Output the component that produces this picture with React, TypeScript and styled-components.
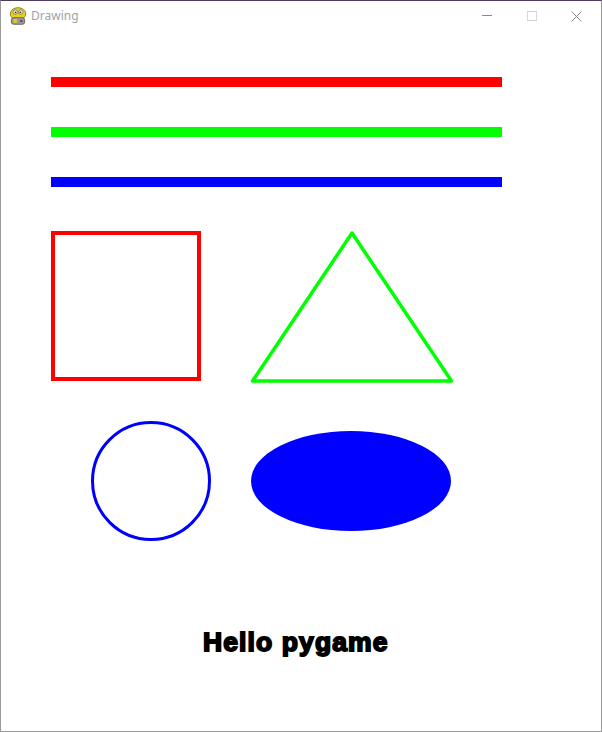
import React from "react";
import styled, { createGlobalStyle } from "styled-components";

const Global = createGlobalStyle`
  html, body { margin: 0; padding: 0; background: #ffffff; }
  body { width: 602px; height: 732px; overflow: hidden; }
`;

const Window = styled.div`
  box-sizing: border-box;
  width: 602px;
  height: 732px;
  display: flex;
  flex-direction: column;
  background: #ffffff;
  border: 1px solid #9a9a9a;
  border-top: 1px solid #4d3c5f;
`;

const TitleBar = styled.div`
  height: 30px;
  flex: 0 0 30px;
  display: flex;
  align-items: center;
  background: #ffffff;
`;

const AppIcon = styled.div`
  width: 20px;
  height: 20px;
  margin-left: 7px;
  margin-right: 3px;
  margin-top: -1px;
  display: flex;
  align-items: center;
  justify-content: center;
`;

const Title = styled.span`
  font-family: "Noto Sans", "Open Sans", sans-serif;
  font-size: 12px;
  color: #a2a2aa;
  flex: 1;
  line-height: 1;
  margin-top: -1px;
`;

const Controls = styled.div`
  display: flex;
  height: 30px;
  margin-right: 2px;
`;

const ControlButton = styled.div`
  width: 45px;
  height: 30px;
  display: flex;
  align-items: center;
  justify-content: center;
`;

const Canvas = styled.svg`
  display: block;
  width: 600px;
  height: 700px;
  flex: 0 0 auto;
`;

const PygameIcon = () => (
  <svg width="20" height="20" viewBox="0 0 18 18">
    <ellipse cx="9" cy="7" rx="7" ry="5.5" fill="#e8d21e" stroke="#8a7a10" strokeWidth="0.8" />
    <circle cx="6.5" cy="5.5" r="2" fill="#fff" stroke="#555" strokeWidth="0.6" />
    <circle cx="11.5" cy="5.5" r="2" fill="#fff" stroke="#555" strokeWidth="0.6" />
    <circle cx="6.8" cy="5.7" r="0.8" fill="#222" />
    <circle cx="11.2" cy="5.7" r="0.8" fill="#222" />
    <rect x="3" y="10.5" width="12" height="6" rx="2" fill="#9a9a9a" stroke="#555" strokeWidth="0.7" />
    <rect x="5" y="12" width="3" height="3" fill="#e8d21e" />
    <circle cx="12" cy="13.5" r="1.2" fill="#6b4a5a" />
  </svg>
);

export default function App() {
  return (
    <>
      <Global />
      <Window>
        <TitleBar>
          <AppIcon>
            <PygameIcon />
          </AppIcon>
          <Title>Drawing</Title>
          <Controls>
            <ControlButton>
              <svg width="10" height="10" viewBox="0 0 10 10">
                <line x1="0" y1="4.5" x2="10" y2="4.5" stroke="#8a8a8a" strokeWidth="1" />
              </svg>
            </ControlButton>
            <ControlButton>
              <svg width="10" height="10" viewBox="0 0 10 10">
                <rect x="0.5" y="0.5" width="9" height="9" fill="none" stroke="#d4d4d4" strokeWidth="1" />
              </svg>
            </ControlButton>
            <ControlButton>
              <svg width="11" height="11" viewBox="0 0 11 11">
                <line x1="0.5" y1="0.5" x2="10.5" y2="10.5" stroke="#8a8a8a" strokeWidth="1" />
                <line x1="10.5" y1="0.5" x2="0.5" y2="10.5" stroke="#8a8a8a" strokeWidth="1" />
              </svg>
            </ControlButton>
          </Controls>
        </TitleBar>
        <Canvas viewBox="0 0 600 700">
          <rect x="50" y="46" width="451" height="10" fill="#ff0000" />
          <rect x="50" y="96" width="451" height="10" fill="#00ff00" />
          <rect x="50" y="146" width="451" height="10" fill="#0000ff" />
          <rect x="52" y="202" width="146" height="146" fill="none" stroke="#ff0000" strokeWidth="4" />
          <polygon
            points="351,202 251.5,350 450.5,350"
            fill="none"
            stroke="#00ff00"
            strokeWidth="3.5"
            strokeLinejoin="round"
          />
          <circle cx="150" cy="450" r="58.5" fill="none" stroke="#0000ff" strokeWidth="3" />
          <ellipse cx="350" cy="450" rx="100" ry="50" fill="#0000ff" />
          <text
            x="202"
            y="620"
            fontFamily="'Liberation Sans', Arial, sans-serif"
            fontWeight="bold"
            fontSize="26.5"
            fill="#000"
            stroke="#000"
            strokeWidth="1.8"
            style={{ letterSpacing: "1.1px" }}
          >
            Hello pygame
          </text>
        </Canvas>
      </Window>
    </>
  );
}
